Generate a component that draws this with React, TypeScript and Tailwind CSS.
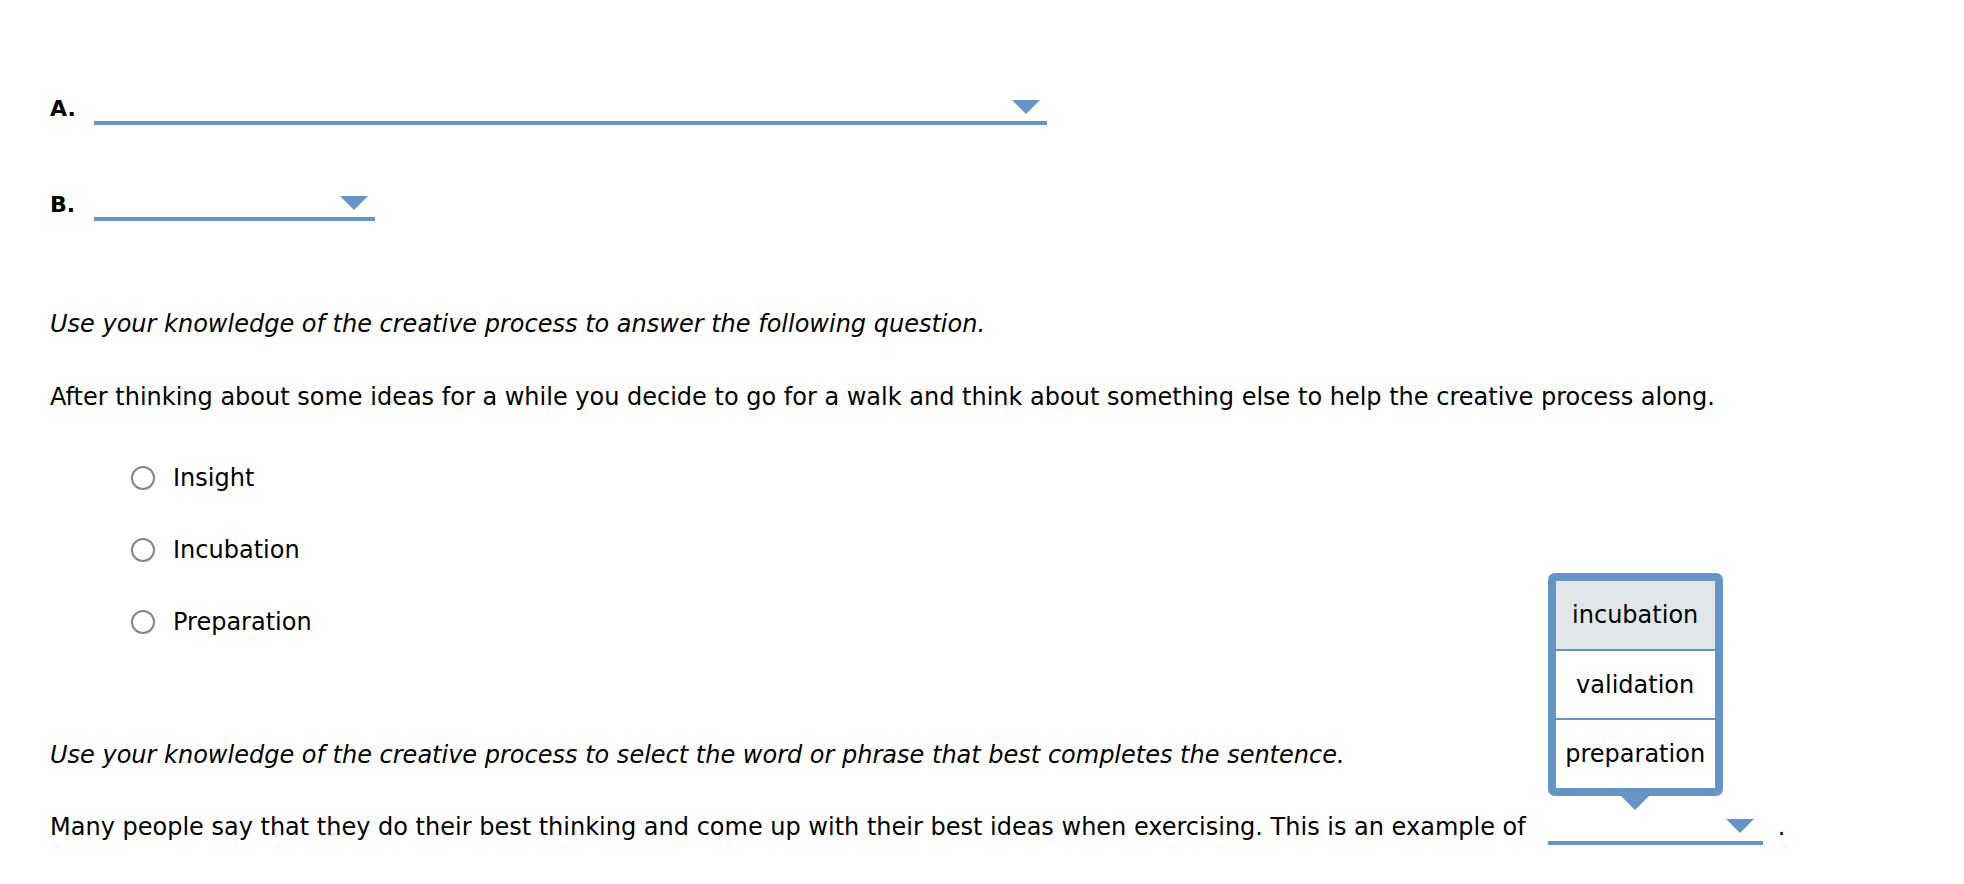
import React from 'react';

const BLUE = 'border-[#6594c5]';

function Arrow({ className }: { className: string }) {
  return (
    <svg
      className={className}
      width="28"
      height="14"
      viewBox="0 0 28 14"
      aria-hidden="true"
    >
      <polygon points="0,0 28,0 14,14" fill="#6594c5" />
    </svg>
  );
}

function Radio({ label }: { label: string }) {
  return (
    <label className="flex h-[30px] items-center">
      <span className="ml-[81px] h-[24px] w-[24px] rounded-full border-2 border-[#858585] bg-white"></span>
      <span className="ml-[18px]">{label}</span>
    </label>
  );
}

export default function App() {
  return (
    <div className="min-h-[884px] bg-white pl-[50px] pt-[94px] text-[24px] leading-[30px] text-black [font-family:'DejaVu_Sans',Verdana,sans-serif]">
      {/* A */}
      <div className="flex h-[30px] items-center">
        <span className="w-[44px] text-[22px] font-bold">A.</span>
        <span className={`relative h-[31px] w-[953px] border-b-4 ${BLUE}`}>
          <Arrow className="absolute right-[7px] top-[6px]" />
        </span>
      </div>

      {/* B */}
      <div className="mt-[66px] flex h-[30px] items-center">
        <span className="w-[44px] text-[22px] font-bold">B.</span>
        <span className={`relative h-[31px] w-[281px] border-b-4 ${BLUE}`}>
          <Arrow className="absolute right-[7px] top-[6px]" />
        </span>
      </div>

      <p className="mt-[89px] italic">
        Use your knowledge of the creative process to answer the following question.
      </p>
      <p className="mt-[43px]">
        After thinking about some ideas for a while you decide to go for a walk and think about something else to help the creative process along.
      </p>

      <div className="mt-[51px] flex flex-col gap-[42px]">
        <Radio label="Insight" />
        <Radio label="Incubation" />
        <Radio label="Preparation" />
      </div>

      <p className="mt-[103px] italic">
        Use your knowledge of the creative process to select the word or phrase that best completes the sentence.
      </p>

      <div className="mt-[42px] flex items-start">
        <span>
          Many people say that they do their best thinking and come up with their best ideas when exercising. This is an example of
        </span>
        <span className={`relative ml-[22px] h-[33px] w-[215px] border-b-4 ${BLUE}`}>
          <Arrow className="absolute right-[9px] top-[7px]" />
          {/* open menu */}
          <div className="absolute bottom-[calc(100%+2px)] left-0 flex w-[175px] flex-col items-center">
            <div className="w-full overflow-hidden rounded-[7px] border-[8px] border-[#6594c5] bg-white text-center">
              <div className="flex h-[68px] items-center justify-center bg-[#e1e7e9]">incubation</div>
              <div className="flex h-[69px] items-center justify-center border-t-2 border-[#6594c5]">validation</div>
              <div className="flex h-[70px] items-center justify-center border-t-2 border-[#6594c5]">preparation</div>
            </div>
            <svg width="28" height="14" viewBox="0 0 28 14" aria-hidden="true">
              <polygon points="0,0 28,0 14,14" fill="#6594c5" />
            </svg>
          </div>
        </span>
        <span className="ml-[15px]">.</span>
      </div>
    </div>
  );
}
